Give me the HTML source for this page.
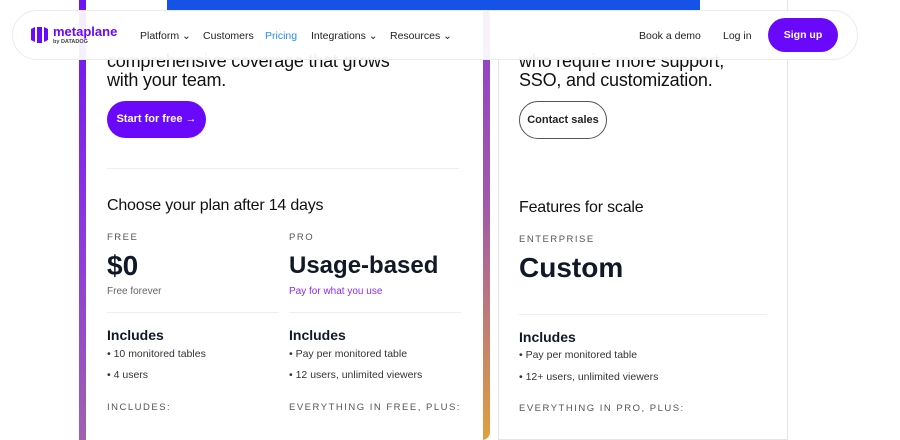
<!DOCTYPE html>
<html><head><style>
*{margin:0;padding:0;box-sizing:border-box}
body{width:900px;height:423px;overflow:hidden;background:#fff;font-family:"Liberation Sans",sans-serif;color:#111827;position:relative}
.a{position:absolute;white-space:nowrap}
.lc{position:absolute;left:79px;top:-20px;width:411px;height:460px;background:linear-gradient(180deg,#8a3ad8 0%,#a35aa8 50%,#e0a040 100%);border-radius:8px}
.lb{position:absolute;left:79px;top:-20px;width:7px;height:460px;background:linear-gradient(180deg,#6a10f5 0%,#8a35e0 50%,#a060b0 100%)}
.lci{position:absolute;left:7px;top:0;right:7px;bottom:0;background:#fff}
.rc{position:absolute;left:498px;top:-20px;width:290px;height:460px;border:1px solid #e4e4ea;background:#fff}
.h{font-size:18px;letter-spacing:-0.2px;color:#111}
.lab{font-size:9.5px;letter-spacing:1.5px;color:#555}
.big{font-size:28px;font-weight:bold;color:#111827}
.inc{font-size:14px;font-weight:bold}
.li{font-size:10.5px;color:#333}
.hr{position:absolute;height:1px;background:#eee}
.nav{position:absolute;left:12px;top:10px;width:846px;height:50px;border-radius:25px;background:rgba(255,255,255,0.93);border:1px solid #ebebeb}
.n{font-size:10.5px;color:#222}
</style></head><body>
<div class="lc"><div class="lci"></div></div>
<div class="lb"></div>
<div class="rc"></div>
<div class="a" style="left:167px;top:0;width:533px;height:10px;background:#1553e8"></div>

<div class="a h" style="left:107px;top:52px;line-height:19px">comprehensive coverage that grows<br>with your team.</div>
<div class="a" style="left:107px;top:101px;width:99px;height:37px;border-radius:19px;background:#6a08fc;color:#fff;font-size:11px;font-weight:bold;line-height:37px;text-align:center">Start for free &#8594;</div>
<div class="hr" style="left:107px;top:168px;width:352px"></div>

<div class="a h" style="left:519px;top:52px;line-height:19px">who require more support,<br>SSO, and customization.</div>
<div class="a" style="left:519px;top:101px;width:88px;height:38px;border-radius:19px;border:1px solid #555;color:#222;font-size:11px;font-weight:bold;line-height:36px;text-align:center">Contact sales</div>

<div class="a h" style="left:107px;top:197px;font-size:16px">Choose your plan after 14 days</div>
<div class="a lab" style="left:107px;top:232px">FREE</div>
<div class="a big" style="left:107px;top:250px">$0</div>
<div class="a" style="left:107px;top:286px;font-size:10px;color:#666">Free forever</div>
<div class="a lab" style="left:289px;top:232px">PRO</div>
<div class="a big" style="left:289px;top:252px;font-size:24px">Usage-based</div>
<div class="a" style="left:289px;top:286px;font-size:10px;color:#8a2cfc">Pay for what you use</div>
<div class="hr" style="left:107px;top:312px;width:172px"></div>
<div class="hr" style="left:289px;top:312px;width:172px"></div>
<div class="a inc" style="left:107px;top:327px">Includes</div>
<div class="a li" style="left:107px;top:348px">• 10 monitored tables</div>
<div class="a li" style="left:107px;top:369px">• 4 users</div>
<div class="a lab" style="left:107px;top:402px">INCLUDES:</div>
<div class="a inc" style="left:289px;top:327px">Includes</div>
<div class="a li" style="left:289px;top:348px">• Pay per monitored table</div>
<div class="a li" style="left:289px;top:369px">• 12 users, unlimited viewers</div>
<div class="a lab" style="left:289px;top:402px">EVERYTHING IN FREE, PLUS:</div>

<div class="a h" style="left:519px;top:199px;font-size:16px">Features for scale</div>
<div class="a lab" style="left:519px;top:234px">ENTERPRISE</div>
<div class="a big" style="left:519px;top:252px">Custom</div>
<div class="hr" style="left:519px;top:314px;width:248px"></div>
<div class="a inc" style="left:519px;top:329px">Includes</div>
<div class="a li" style="left:519px;top:349px">• Pay per monitored table</div>
<div class="a li" style="left:519px;top:371px">• 12+ users, unlimited viewers</div>
<div class="a lab" style="left:519px;top:403px">EVERYTHING IN PRO, PLUS:</div>

<div class="nav"></div>
<svg class="a" style="left:29px;top:25px" width="21" height="20" viewBox="0 0 21 20"><path d="M2 4 L6 2 L6 17 L2 15Z M8 2 L13 2 L13 18 L8 18Z M15 2 L19 4 L19 15 L15 17Z" fill="#6a08fc"/></svg>
<div class="a" style="left:53px;top:24px;font-size:13px;font-weight:bold;color:#6a08fc">metaplane</div>
<div class="a" style="left:53px;top:39px;font-size:5.5px;font-weight:bold;color:#444">by DATADOG</div>
<div class="a n" style="left:140px;top:30px">Platform ⌄</div>
<div class="a n" style="left:203px;top:30px">Customers</div>
<div class="a n" style="left:265px;top:30px;color:#2a8cf0">Pricing</div>
<div class="a n" style="left:311px;top:30px">Integrations ⌄</div>
<div class="a n" style="left:390px;top:30px">Resources ⌄</div>
<div class="a n" style="left:639px;top:30px">Book a demo</div>
<div class="a n" style="left:723px;top:30px">Log in</div>
<div class="a" style="left:768px;top:18px;width:70px;height:34px;border-radius:17px;background:#6a08fc;color:#fff;font-size:10.5px;font-weight:bold;line-height:34px;text-align:center">Sign up</div>
</body></html>
